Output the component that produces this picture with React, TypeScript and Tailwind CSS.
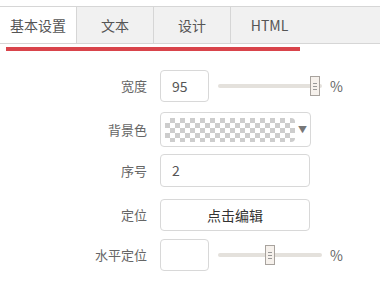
import React from "react";

const tabs = ["基本设置", "文本", "设计", "HTML"];

function Slider({ pos }: { pos: number }) {
  return (
    <div className="ml-[9px] flex items-center">
      <div className="relative w-[104px] h-[4px] bg-[#e4e1dc] rounded-sm">
        <div
          className="absolute top-[-8px] w-[10px] h-[20px] bg-[#f6f1ec] border border-[#a8a39e] flex flex-col items-center justify-center gap-[2px]"
          style={{ left: pos }}
        >
          <div className="w-[4px] h-px bg-[#999]" />
          <div className="w-[4px] h-px bg-[#999]" />
          <div className="w-[4px] h-px bg-[#999]" />
        </div>
      </div>
      <span className="ml-[8px] text-[14px] text-[#666]">%</span>
    </div>
  );
}

function Label({ text }: { text: string }) {
  return (
    <div className="w-[147px] text-right text-[13px] text-[#666] shrink-0">{text}</div>
  );
}

export default function App() {
  return (
    <div
      className="w-[380px] h-[293px] bg-white overflow-hidden"
      style={{ fontFamily: '"Noto Sans CJK SC", "Noto Sans", sans-serif' }}
    >
      {/* tabs */}
      <div className="mt-[6px] flex h-[38px] bg-[#f1f1f1] border-t border-b border-[#d6d6d6]">
        {tabs.map((t, i) => (
          <div
            key={t}
            className={
              "w-[77px] flex items-center justify-center text-[14px] text-[#555] " +
              (i < 3 ? "border-r border-[#d6d6d6] " : "") +
              (i === 0 ? "bg-white" : "")
            }
          >
            {t}
          </div>
        ))}
      </div>
      <div className="ml-[6px] mt-[3px] w-[294px] h-[4px] bg-[#d9444b]" />

      {/* form */}
      <div className="mt-[19px] flex flex-col">
        <div className="flex items-center h-[32px]">
          <Label text="宽度" />
          <div className="ml-[13px] w-[49px] h-[32px] border border-[#d8d8d8] rounded-[4px] flex items-center pl-[11px] text-[14px] text-[#555]">
            95
          </div>
          <Slider pos={92} />
        </div>

        <div className="flex items-center h-[35px] mt-[10px]">
          <Label text="背景色" />
          <div className="ml-[13px] w-[151px] h-[35px] border border-[#d8d8d8] rounded-[4px] flex items-center pl-[4px]">
            <div
              className="w-[130px] h-[24px] rounded-[4px] bg-white"
              style={{
                backgroundImage:
                  "linear-gradient(45deg, #cdcdcd 25%, transparent 25%, transparent 75%, #cdcdcd 75%), linear-gradient(45deg, #cdcdcd 25%, transparent 25%, transparent 75%, #cdcdcd 75%)",
                backgroundSize: "10px 10px",
                backgroundPosition: "0 0, 5px 5px",
              }}
            />
            <span className="ml-[3px] text-[9px] text-[#777]">▼</span>
          </div>
        </div>

        <div className="flex items-center h-[33px] mt-[7px]">
          <Label text="序号" />
          <div className="ml-[13px] w-[150px] h-[33px] border border-[#d8d8d8] rounded-[4px] flex items-center pl-[11px] text-[14px] text-[#555]">
            2
          </div>
        </div>

        <div className="flex items-center h-[32px] mt-[12px]">
          <Label text="定位" />
          <div className="ml-[13px] w-[150px] h-[32px] border border-[#d8d8d8] rounded-[4px] flex items-center justify-center text-[14px] text-[#333]">
            点击编辑
          </div>
        </div>

        <div className="flex items-center h-[32px] mt-[8px]">
          <Label text="水平定位" />
          <div className="ml-[13px] w-[49px] h-[32px] border border-[#d8d8d8] rounded-[4px]" />
          <Slider pos={47} />
        </div>
      </div>
    </div>
  );
}
